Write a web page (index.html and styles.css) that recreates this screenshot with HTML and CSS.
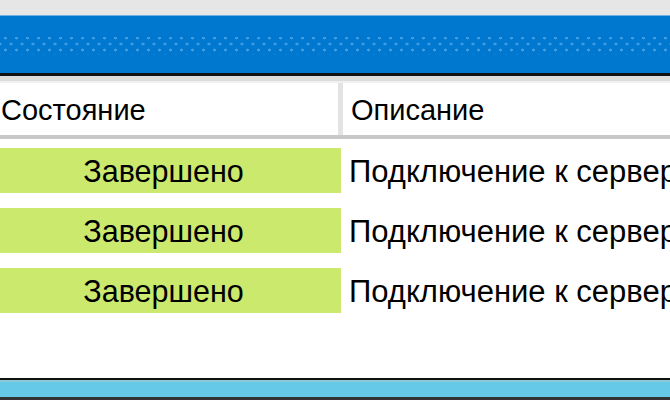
FILE: index.html
```html
<!DOCTYPE html>
<html lang="ru">
<head>
<meta charset="utf-8">
<link rel="stylesheet" href="styles.css">
</head>
<body>
<div class="window">
  <div class="topstrip"></div>
  <div class="titlebar"><div class="dots"></div></div>
  <div class="titleedge"></div>
  <div class="table">
    <div class="head">
      <div class="hcell c1">Состояние</div>
      <div class="hsep"></div>
      <div class="hcell c2">Описание</div>
    </div>
    <div class="rows">
      <div class="row"><div class="status">Завершено</div><div class="desc">Подключение к серверу</div></div>
      <div class="row"><div class="status">Завершено</div><div class="desc">Подключение к серверу</div></div>
      <div class="row"><div class="status">Завершено</div><div class="desc">Подключение к серверу</div></div>
    </div>
  </div>
  <div class="bottombar"></div>
</div>
</body>
</html>
```
FILE: styles.css
```css
html, body { margin: 0; padding: 0; }
body { width: 670px; height: 400px; overflow: hidden; background: #ffffff; font-family: "Liberation Sans", Arial, sans-serif; }
.window { display: flex; flex-direction: column; height: 400px; overflow: hidden; }
.topstrip { height: 15px; background: #e6e6e6; border-bottom: 1px solid #6fb0e0; }
.titlebar { height: 57px; background: #0078cf; display: flex; flex-direction: column; justify-content: center; }
.dots {
  height: 18px;
  margin-top: 3px;
  background-image:
    radial-gradient(circle, #3f9ce2 1.3px, transparent 1.7px),
    radial-gradient(circle, #3f9ce2 1.3px, transparent 1.7px);
  background-size: 11px 12px, 11px 12px;
  background-position: 0px -5px, 5.5px 1px;
}
.titleedge { height: 3px; background: #111; border-bottom: 5px solid #dcdcdc; }
.table { flex: 1; display: flex; flex-direction: column; overflow: hidden; }
.head { height: 52px; display: flex; align-items: stretch; border-top: 2px solid #f0f0f0; border-bottom: 4px solid #c8c8c8; background: #fff; }
.hcell { display: flex; align-items: center; font-size: 29px; color: #000; padding-top: 3px; }
.c1 { width: 338px; flex-shrink: 0; padding-left: 1px; box-sizing: border-box; }
.hsep { width: 5px; flex-shrink: 0; background: #e3e3e3; }
.c2 { padding-left: 8px; }
.rows { display: flex; flex-direction: column; gap: 15px; padding-top: 9px; }
.row { display: flex; height: 45px; align-items: stretch; }
.status { width: 341px; flex-shrink: 0; background: #cbe96d; display: flex; align-items: center; justify-content: center; font-size: 30.5px; color: #000; padding-top: 2px; padding-right: 14px; box-sizing: border-box; }
.desc { padding-left: 8px; display: flex; align-items: center; font-size: 31px; color: #000; white-space: nowrap; padding-top: 2px; }
.bottombar { height: 17px; flex-shrink: 0; background: #66c9e8; border-top: 2px solid #111; box-shadow: inset 0 2px 0 #8cc8d8; border-bottom: 3px solid #333; margin-top: auto; }
```
